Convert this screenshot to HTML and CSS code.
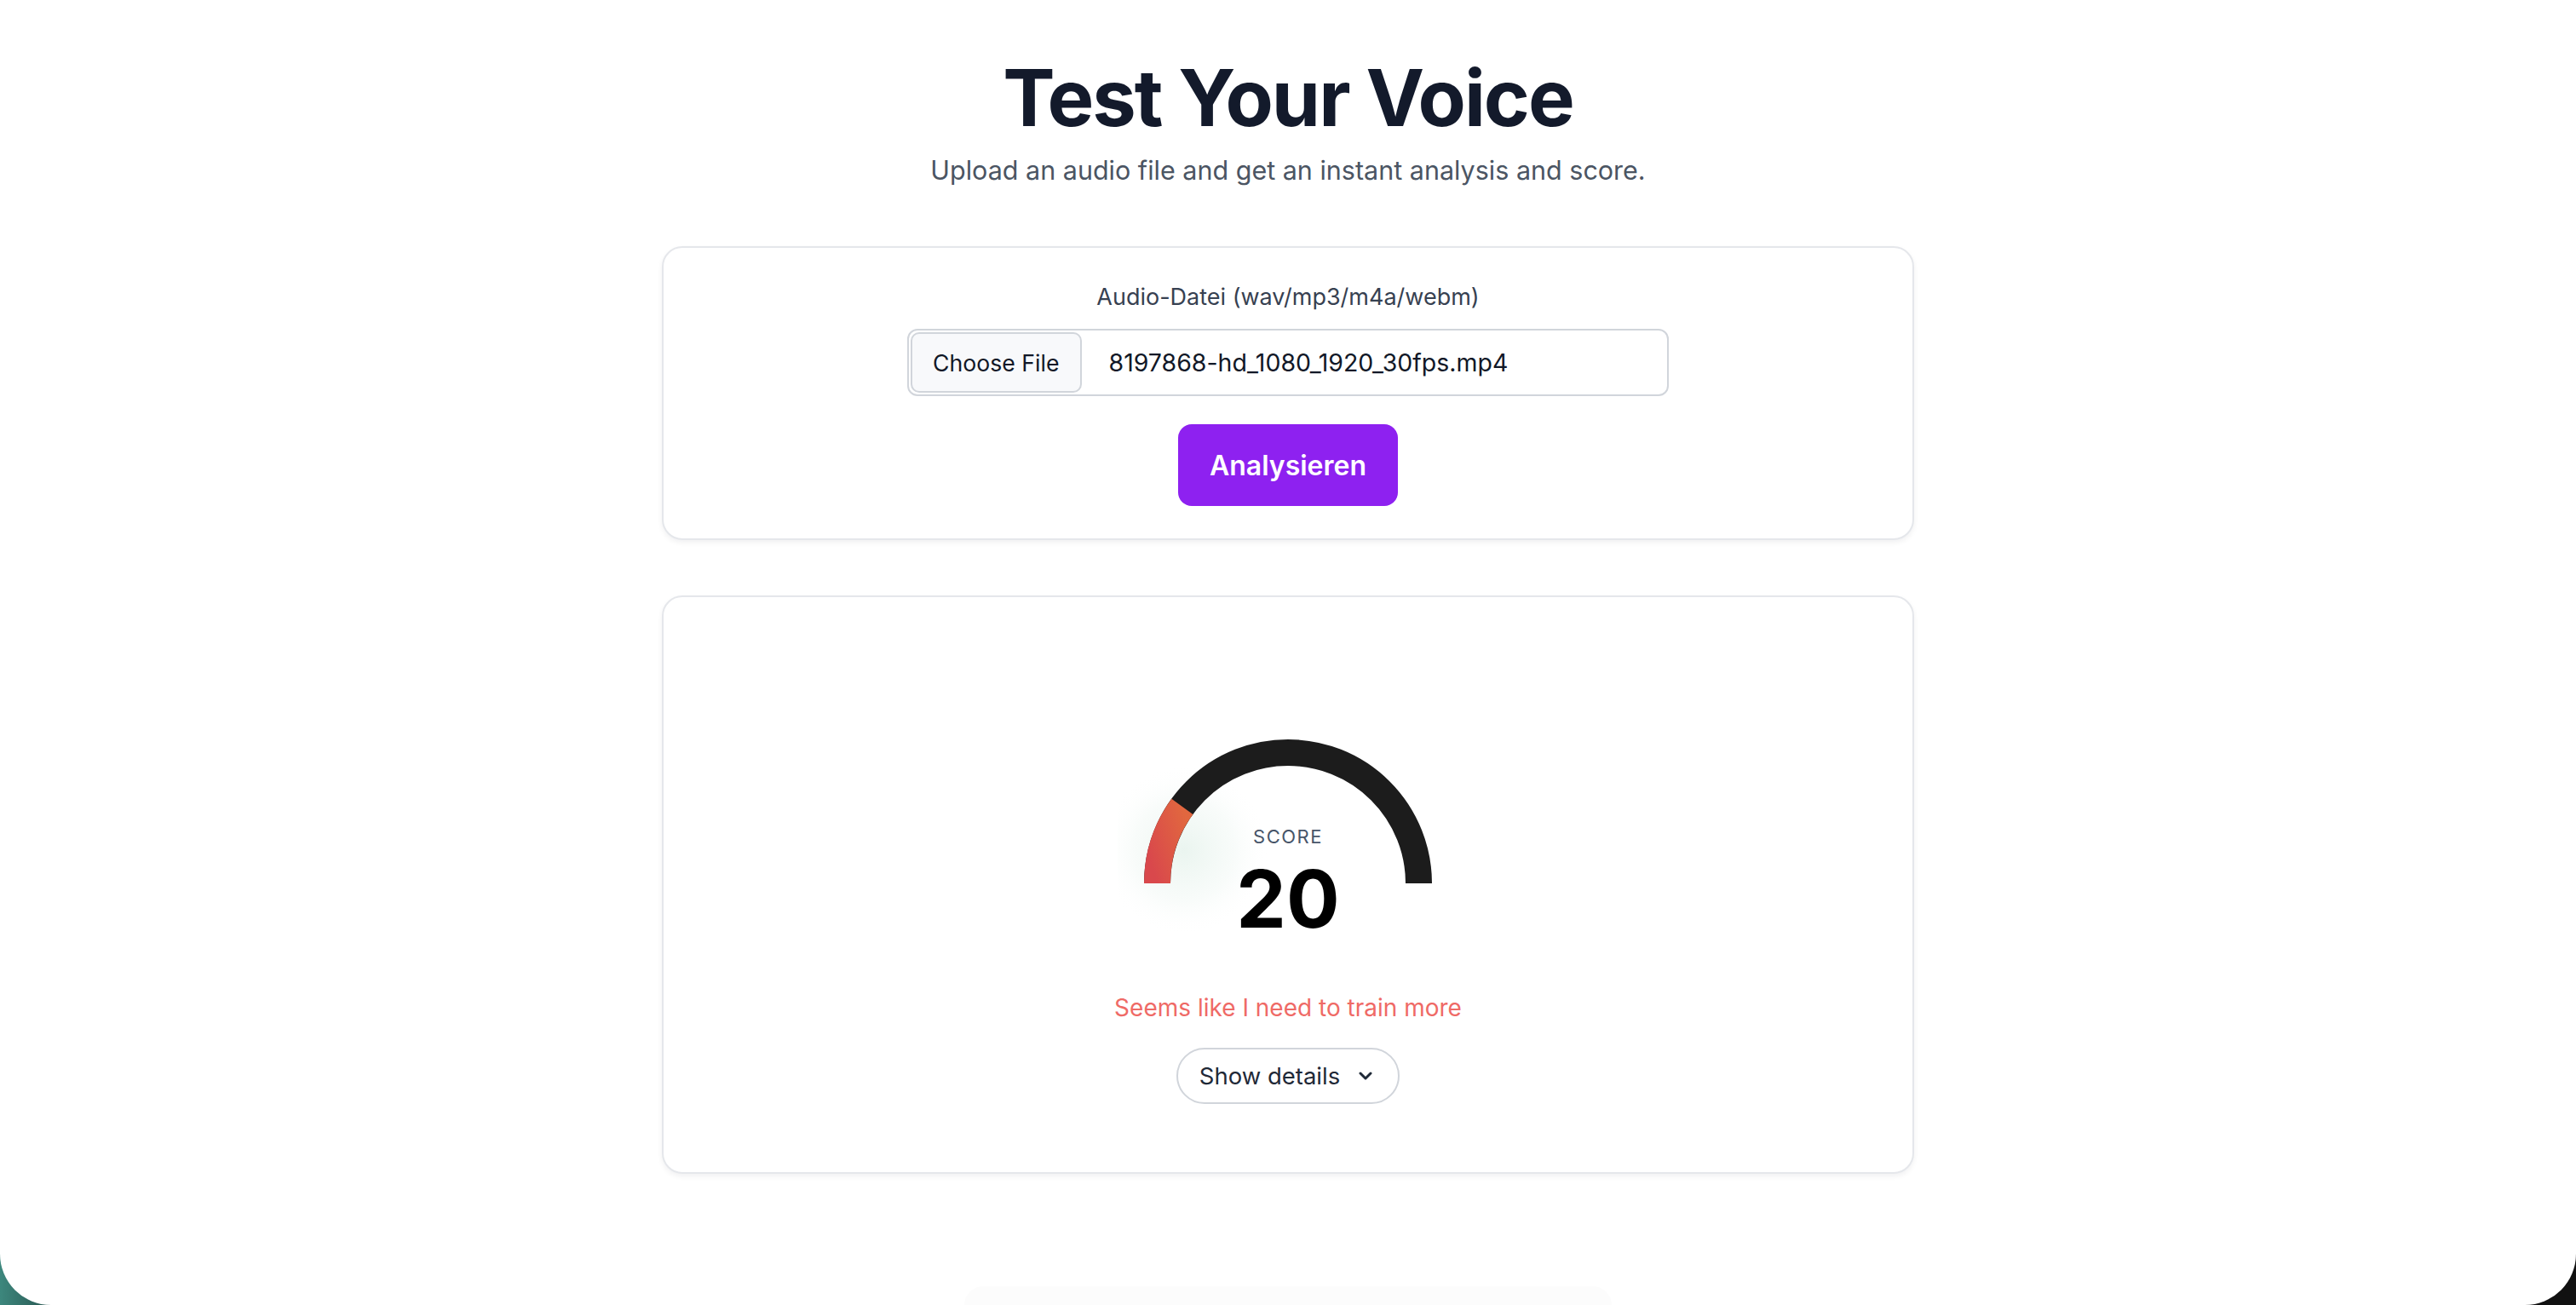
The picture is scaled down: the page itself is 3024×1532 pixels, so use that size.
FILE: index.html
```html
<!DOCTYPE html>
<html lang="en">
<head>
<meta charset="utf-8">
<title>Test Your Voice</title>
<link rel="stylesheet" href="styles.css">
</head>
<body>
<div class="window">
  <main class="page">
    <header class="hero">
      <h1 class="title">Test Your Voice</h1>
      <p class="subtitle">Upload an audio file and get an instant analysis and score.</p>
    </header>

    <section class="card upload-card">
      <div class="field-label">Audio-Datei (wav/mp3/m4a/webm)</div>
      <div class="file-input">
        <span class="file-btn">Choose File</span>
        <span class="file-name">8197868-hd_1080_1920_30fps.mp4</span>
      </div>
      <button class="primary-btn" type="button">Analysieren</button>
    </section>

    <section class="card result-card">
      <div class="gauge">
        <svg class="gauge-svg" width="400" height="251" viewBox="0 0 400 251">
          <defs>
            <radialGradient id="glow" cx="0.5" cy="0.5" r="0.5">
              <stop offset="0" stop-color="#5fae86" stop-opacity="0.13"/>
              <stop offset="0.6" stop-color="#7dbf9c" stop-opacity="0.05"/>
              <stop offset="1" stop-color="#ffffff" stop-opacity="0"/>
            </radialGradient>
            <linearGradient id="red" x1="0" y1="1" x2="1" y2="0">
              <stop offset="0" stop-color="#d9484c"/>
              <stop offset="1" stop-color="#e1673f"/>
            </linearGradient>
          </defs>
          <circle cx="78" cy="150" r="100" fill="url(#glow)"/>
          <path d="M 46.5 189 A 153.5 153.5 0 0 1 353.5 189" fill="none" stroke="#1c1c1c" stroke-width="31"/>
          <path d="M 46.5 189 A 153.5 153.5 0 0 1 75.82 98.77" fill="none" stroke="url(#red)" stroke-width="31"/>
        </svg>
        <div class="gauge-text">
          <span class="score-label">SCORE</span>
          <span class="score-value">20</span>
        </div>
      </div>
      <p class="verdict">Seems like I need to train more</p>
      <button class="details-btn" type="button">
        <span>Show details</span>
        <svg class="chev" width="16" height="10" viewBox="0 0 16 10"><path d="M2 2 L8 8 L14 2" fill="none" stroke="#1f2937" stroke-width="3" stroke-linecap="round" stroke-linejoin="round"/></svg>
      </button>
    </section>
  </main>
  <div class="dock-hint"></div>
</div>
</body>
</html>
```

FILE: styles.css
```css
* { box-sizing: border-box; }

html {
  margin: 0;
  height: 100%;
  background: linear-gradient(90deg, #3d877d 0%, #1d3c39 3%, #111111 10%, #111111 100%);
}

body {
  margin: 0;
  height: 100%;
  font-family: Inter, "Noto Sans", "Liberation Sans", sans-serif;
  color: #111827;
}

.window {
  height: 1532px;
  background: #ffffff;
  border-radius: 0 0 60px 60px;
  overflow: hidden;
  display: flex;
  flex-direction: column;
  align-items: center;
}

.page {
  width: 1470px;
  display: flex;
  flex-direction: column;
}

.hero {
  padding-top: 67px;
  text-align: center;
}

.title {
  margin: 0;
  font-size: 92px;
  line-height: 96px;
  font-weight: 700;
  letter-spacing: -2px;
  color: #131a2b;
}

.subtitle {
  margin: 13px 0 0;
  font-size: 30.5px;
  line-height: 48px;
  color: #4b5563;
}

.card {
  background: #ffffff;
  border: 2px solid #e5e7eb;
  border-radius: 24px;
  box-shadow: 0 3px 6px rgba(15, 23, 42, 0.06);
  display: flex;
  flex-direction: column;
  align-items: center;
}

.upload-card {
  margin-top: 65px;
  padding: 38px 0;
}

.field-label {
  font-size: 27px;
  line-height: 40px;
  color: #374151;
}

.file-input {
  margin-top: 17px;
  width: 894px;
  height: 79px;
  border: 2px solid #d1d5db;
  border-radius: 12px;
  padding: 2px;
  display: flex;
  align-items: stretch;
  font-size: 26.67px;
  color: #111827;
}

.file-btn {
  display: flex;
  align-items: center;
  padding: 0 24px;
  background: #f8f9fb;
  border: 2px solid #d1d5db;
  border-radius: 10px;
}

.file-name {
  display: flex;
  align-items: center;
  padding-left: 32px;
  font-size: 28.5px;
}

.primary-btn {
  margin-top: 33px;
  width: 258px;
  height: 96px;
  border: none;
  border-radius: 16px;
  background: #8e21f0;
  color: #ffffff;
  font-family: inherit;
  font-size: 32px;
  font-weight: 600;
}

.result-card {
  margin-top: 65px;
  height: 679px;
  padding-top: 147px;
}

.gauge {
  position: relative;
  width: 400px;
  height: 251px;
}

.gauge-svg { display: block; }

.gauge-text {
  position: absolute;
  left: 0;
  right: 0;
  top: 123px;
  display: flex;
  flex-direction: column;
  align-items: center;
  gap: 16px;
}

.score-label {
  font-size: 22px;
  line-height: 22px;
  letter-spacing: 1.5px;
  color: #475569;
}

.score-value {
  font-size: 93px;
  line-height: 92px;
  font-weight: 700;
  color: #000000;
}

.verdict {
  margin: 64px 0 0;
  font-size: 28px;
  line-height: 40px;
  color: #ef6a66;
}

.details-btn {
  margin-top: 27px;
  height: 66px;
  padding: 0 30px 0 25px;
  border: 2px solid #d1d5db;
  border-radius: 33px;
  background: #ffffff;
  display: flex;
  align-items: center;
  gap: 22px;
  font-family: inherit;
  font-size: 27.5px;
  color: #1f2937;
}

.chev { display: block; }

.dock-hint {
  margin-top: auto;
  width: 760px;
  height: 22px;
  background: #fcfcfc;
  border-radius: 40px 40px 0 0;
}
```
